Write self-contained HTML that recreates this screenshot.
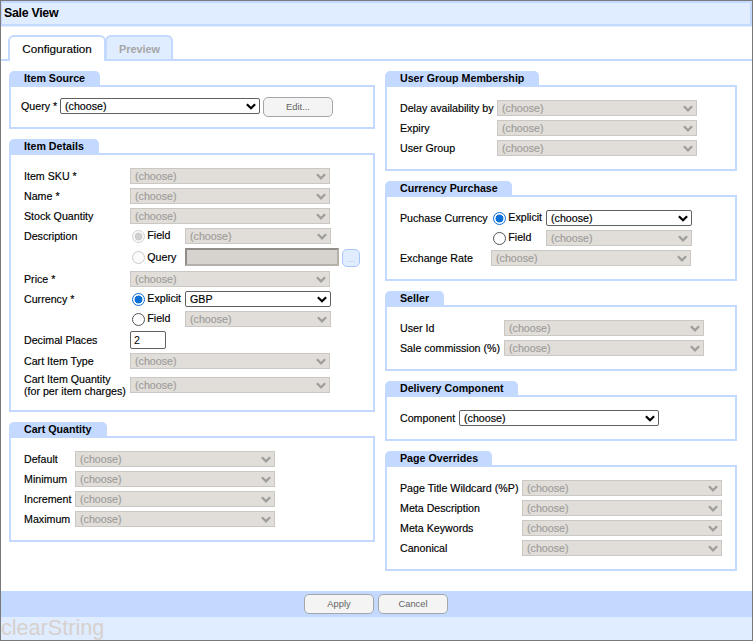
<!DOCTYPE html><html><head><meta charset="utf-8"><title>Sale View</title><style>
html,body{margin:0;padding:0;}
body{width:753px;height:641px;position:relative;overflow:hidden;background:#fff;font-family:"Liberation Sans",sans-serif;font-size:10.67px;color:#000;}
div,span{position:absolute;box-sizing:border-box;white-space:nowrap;}
.frame{left:0;top:0;width:753px;height:641px;border:1px solid #7a7a7a;}
.title{left:1px;top:1px;width:751px;height:25px;background:#e0ecff;border:1px solid #c3d9ff;border-width:2px 2px 2px 1px;box-shadow:0 1px 0 rgba(195,217,255,0.45);}
.title span{left:2px;top:3px;font-weight:bold;font-size:12.4px;line-height:14px;letter-spacing:-0.3px;}
.tabline{left:1px;top:59px;width:751px;height:2px;background:#c3d9ff;}
.tab{top:35px;border:2px solid #c3d9ff;border-bottom:none;border-radius:6px 6px 0 0;font-size:11.7px;line-height:14px;text-align:center;padding-top:5px;}
.tab.on{background:#fff;height:26px;}
.tab.off{background:#e0ecff;color:#a6a6a6;height:24px;font-weight:bold;font-size:10.9px;padding-left:1px;}
.lg{height:15px;background:#c3d9ff;border-radius:5px 5px 0 0;font-weight:bold;line-height:14px;padding-left:15px;}
.fs{border:2px solid #c3d9ff;}
.lb,.sd,.se,.tab.on{-webkit-text-stroke:0.16px;}
.lb{line-height:12px;}
.sd{height:16px;background:#e1ded9;border:1px solid #cbc8c3;color:#9e9c99;line-height:14px;padding-left:4px;}
.se{height:16px;background:#fff;border:1px solid #606060;border-radius:2px;color:#000;line-height:14px;padding-left:4px;}
.ch{right:3px;top:3.5px;width:10px;height:7px;}
.btn{height:20px;background:#f4f4f4;border:1px solid #a3a6aa;border-radius:5px;color:#636363;font-size:9.33px;line-height:18px;text-align:center;}
.rd{width:13px;height:13px;border-radius:50%;}
.bar{left:1px;top:591px;width:751px;height:26px;background:#c3d9ff;}
.foot{left:1px;top:617px;width:751px;height:23px;background:#e0ecff;}
.logo{left:1px;top:614px;font-size:21.6px;line-height:28px;color:#d7d1cd;}
</style></head><body>
<div class="title"><span>Sale View</span></div>
<div class="tabline"></div>
<div class="tab on" style="left:8px;width:98px;">Configuration</div>
<div class="tab off" style="left:105px;width:68px;">Preview</div>
<div class="lg" style="left:9px;top:71px;width:91px;">Item Source</div>
<div class="fs" style="left:9px;top:85px;width:366px;height:44px;"></div>
<span class="lb" style="left:21px;top:100px;">Query *</span>
<div class="se" style="left:60px;top:98px;width:200px;">(choose)<svg class="ch" viewBox="0 0 10 7" style="position:absolute"><path d="M0.9 1.2 L5 5.3 L9.1 1.2" fill="none" stroke="#000" stroke-width="2.2"/></svg></div>
<div class="btn" style="left:263px;top:97px;width:70px;height:20px;line-height:18px">Edit...</div>
<div class="lg" style="left:9px;top:139px;width:90px;">Item Details</div>
<div class="fs" style="left:9px;top:153px;width:366px;height:259px;"></div>
<span class="lb" style="left:24px;top:170px;">Item SKU *</span>
<span class="lb" style="left:24px;top:190px;">Name *</span>
<span class="lb" style="left:24px;top:210px;">Stock Quantity</span>
<span class="lb" style="left:24px;top:230px;">Description</span>
<span class="lb" style="left:24px;top:273px;">Price *</span>
<span class="lb" style="left:24px;top:293px;">Currency *</span>
<span class="lb" style="left:24px;top:334px;">Decimal Places</span>
<span class="lb" style="left:24px;top:355px;">Cart Item Type</span>
<span class="lb" style="left:24px;top:373px;">Cart Item Quantity</span>
<span class="lb" style="left:24px;top:385px;">(for per item charges)</span>
<div class="sd" style="left:130px;top:168px;width:200px;">(choose)<svg class="ch" viewBox="0 0 10 7" style="position:absolute"><path d="M0.9 1.2 L5 5.3 L9.1 1.2" fill="none" stroke="#9f9e9b" stroke-width="2.3"/></svg></div>
<div class="sd" style="left:130px;top:188px;width:200px;">(choose)<svg class="ch" viewBox="0 0 10 7" style="position:absolute"><path d="M0.9 1.2 L5 5.3 L9.1 1.2" fill="none" stroke="#9f9e9b" stroke-width="2.3"/></svg></div>
<div class="sd" style="left:130px;top:208px;width:200px;">(choose)<svg class="ch" viewBox="0 0 10 7" style="position:absolute"><path d="M0.9 1.2 L5 5.3 L9.1 1.2" fill="none" stroke="#9f9e9b" stroke-width="2.3"/></svg></div>
<div class="sd" style="left:130px;top:271px;width:200px;">(choose)<svg class="ch" viewBox="0 0 10 7" style="position:absolute"><path d="M0.9 1.2 L5 5.3 L9.1 1.2" fill="none" stroke="#9f9e9b" stroke-width="2.3"/></svg></div>
<div class="sd" style="left:130px;top:353px;width:200px;">(choose)<svg class="ch" viewBox="0 0 10 7" style="position:absolute"><path d="M0.9 1.2 L5 5.3 L9.1 1.2" fill="none" stroke="#9f9e9b" stroke-width="2.3"/></svg></div>
<div class="sd" style="left:130px;top:377px;width:200px;">(choose)<svg class="ch" viewBox="0 0 10 7" style="position:absolute"><path d="M0.9 1.2 L5 5.3 L9.1 1.2" fill="none" stroke="#9f9e9b" stroke-width="2.3"/></svg></div>
<div class="rd" style="left:132px;top:230px;border:1px solid #d0d0d0;background:radial-gradient(circle,#cfcfcf 0,#cfcfcf 3.6px,#fafafa 4.3px);"></div>
<span class="lb" style="left:147.3px;top:229px;">Field</span>
<div class="sd" style="left:185px;top:228px;width:146px;">(choose)<svg class="ch" viewBox="0 0 10 7" style="position:absolute"><path d="M0.9 1.2 L5 5.3 L9.1 1.2" fill="none" stroke="#9f9e9b" stroke-width="2.3"/></svg></div>
<div class="rd" style="left:132px;top:251px;border:1px solid #c9c9c9;background:#fbfbfb;"></div>
<span class="lb" style="left:147.3px;top:251px;">Query</span>
<div style="left:185px;top:248px;width:154px;height:18px;background:#d6d3ce;border:2px solid;border-color:#908d88 #b4b1ac #b4b1ac #908d88;"></div>
<div style="left:342px;top:249px;width:18px;height:18px;background:#e0ecff;border:1px solid #a9c6fa;border-radius:5px;color:#c4c4c4;font-size:9.33px;line-height:19px;text-align:center;">...</div>
<div class="rd" style="left:132px;top:293px;border:1.4px solid #0b6fd8;background:radial-gradient(circle,#0b6fd8 0,#0b6fd8 3.6px,#fff 4.3px);"></div>
<span class="lb" style="left:147.3px;top:292px;">Explicit</span>
<div class="se" style="left:185px;top:291px;width:146px;">GBP<svg class="ch" viewBox="0 0 10 7" style="position:absolute"><path d="M0.9 1.2 L5 5.3 L9.1 1.2" fill="none" stroke="#000" stroke-width="2.2"/></svg></div>
<div class="rd" style="left:132px;top:313px;border:1.3px solid #555;background:#fff;"></div>
<span class="lb" style="left:147.3px;top:312px;">Field</span>
<div class="sd" style="left:185px;top:311px;width:146px;">(choose)<svg class="ch" viewBox="0 0 10 7" style="position:absolute"><path d="M0.9 1.2 L5 5.3 L9.1 1.2" fill="none" stroke="#9f9e9b" stroke-width="2.3"/></svg></div>
<div style="left:130px;top:331px;width:36px;height:18px;background:#fff;border:1px solid #606060;border-radius:2px;line-height:16px;padding-left:3px;">2</div>
<div class="lg" style="left:9px;top:422px;width:98px;">Cart Quantity</div>
<div class="fs" style="left:9px;top:436px;width:366px;height:106px;"></div>
<span class="lb" style="left:24px;top:453px;">Default</span>
<div class="sd" style="left:75px;top:451px;width:200px;">(choose)<svg class="ch" viewBox="0 0 10 7" style="position:absolute"><path d="M0.9 1.2 L5 5.3 L9.1 1.2" fill="none" stroke="#9f9e9b" stroke-width="2.3"/></svg></div>
<span class="lb" style="left:24px;top:473px;">Minimum</span>
<div class="sd" style="left:75px;top:471px;width:200px;">(choose)<svg class="ch" viewBox="0 0 10 7" style="position:absolute"><path d="M0.9 1.2 L5 5.3 L9.1 1.2" fill="none" stroke="#9f9e9b" stroke-width="2.3"/></svg></div>
<span class="lb" style="left:24px;top:493px;">Increment</span>
<div class="sd" style="left:75px;top:491px;width:200px;">(choose)<svg class="ch" viewBox="0 0 10 7" style="position:absolute"><path d="M0.9 1.2 L5 5.3 L9.1 1.2" fill="none" stroke="#9f9e9b" stroke-width="2.3"/></svg></div>
<span class="lb" style="left:24px;top:513px;">Maximum</span>
<div class="sd" style="left:75px;top:511px;width:200px;">(choose)<svg class="ch" viewBox="0 0 10 7" style="position:absolute"><path d="M0.9 1.2 L5 5.3 L9.1 1.2" fill="none" stroke="#9f9e9b" stroke-width="2.3"/></svg></div>
<div class="lg" style="left:385px;top:71px;width:154px;">User Group Membership</div>
<div class="fs" style="left:385px;top:85px;width:352px;height:86px;"></div>
<span class="lb" style="left:400px;top:102px;">Delay availability by</span>
<div class="sd" style="left:497px;top:100px;width:200px;">(choose)<svg class="ch" viewBox="0 0 10 7" style="position:absolute"><path d="M0.9 1.2 L5 5.3 L9.1 1.2" fill="none" stroke="#9f9e9b" stroke-width="2.3"/></svg></div>
<span class="lb" style="left:400px;top:122px;">Expiry</span>
<div class="sd" style="left:497px;top:120px;width:200px;">(choose)<svg class="ch" viewBox="0 0 10 7" style="position:absolute"><path d="M0.9 1.2 L5 5.3 L9.1 1.2" fill="none" stroke="#9f9e9b" stroke-width="2.3"/></svg></div>
<span class="lb" style="left:400px;top:142px;">User Group</span>
<div class="sd" style="left:497px;top:140px;width:200px;">(choose)<svg class="ch" viewBox="0 0 10 7" style="position:absolute"><path d="M0.9 1.2 L5 5.3 L9.1 1.2" fill="none" stroke="#9f9e9b" stroke-width="2.3"/></svg></div>
<div class="lg" style="left:385px;top:181px;width:127px;">Currency Purchase</div>
<div class="fs" style="left:385px;top:195px;width:352px;height:86px;"></div>
<span class="lb" style="left:400px;top:212px;">Puchase Currency</span>
<div class="rd" style="left:493px;top:212px;border:1.4px solid #0b6fd8;background:radial-gradient(circle,#0b6fd8 0,#0b6fd8 3.6px,#fff 4.3px);"></div>
<span class="lb" style="left:508.3px;top:211px;">Explicit</span>
<div class="se" style="left:546px;top:210px;width:146px;">(choose)<svg class="ch" viewBox="0 0 10 7" style="position:absolute"><path d="M0.9 1.2 L5 5.3 L9.1 1.2" fill="none" stroke="#000" stroke-width="2.2"/></svg></div>
<div class="rd" style="left:493px;top:232px;border:1.3px solid #555;background:#fff;"></div>
<span class="lb" style="left:508.3px;top:231px;">Field</span>
<div class="sd" style="left:546px;top:230px;width:146px;">(choose)<svg class="ch" viewBox="0 0 10 7" style="position:absolute"><path d="M0.9 1.2 L5 5.3 L9.1 1.2" fill="none" stroke="#9f9e9b" stroke-width="2.3"/></svg></div>
<span class="lb" style="left:400px;top:252px;">Exchange Rate</span>
<div class="sd" style="left:491px;top:250px;width:200px;">(choose)<svg class="ch" viewBox="0 0 10 7" style="position:absolute"><path d="M0.9 1.2 L5 5.3 L9.1 1.2" fill="none" stroke="#9f9e9b" stroke-width="2.3"/></svg></div>
<div class="lg" style="left:385px;top:291px;width:59px;">Seller</div>
<div class="fs" style="left:385px;top:305px;width:352px;height:66px;"></div>
<span class="lb" style="left:400px;top:322px;">User Id</span>
<div class="sd" style="left:504px;top:320px;width:200px;">(choose)<svg class="ch" viewBox="0 0 10 7" style="position:absolute"><path d="M0.9 1.2 L5 5.3 L9.1 1.2" fill="none" stroke="#9f9e9b" stroke-width="2.3"/></svg></div>
<span class="lb" style="left:400px;top:342px;">Sale commission (%)</span>
<div class="sd" style="left:504px;top:340px;width:200px;">(choose)<svg class="ch" viewBox="0 0 10 7" style="position:absolute"><path d="M0.9 1.2 L5 5.3 L9.1 1.2" fill="none" stroke="#9f9e9b" stroke-width="2.3"/></svg></div>
<div class="lg" style="left:385px;top:381px;width:133px;">Delivery Component</div>
<div class="fs" style="left:385px;top:395px;width:352px;height:46px;"></div>
<span class="lb" style="left:400px;top:412px;">Component</span>
<div class="se" style="left:459px;top:410px;width:200px;">(choose)<svg class="ch" viewBox="0 0 10 7" style="position:absolute"><path d="M0.9 1.2 L5 5.3 L9.1 1.2" fill="none" stroke="#000" stroke-width="2.2"/></svg></div>
<div class="lg" style="left:385px;top:451px;width:107px;">Page Overrides</div>
<div class="fs" style="left:385px;top:465px;width:352px;height:106px;"></div>
<span class="lb" style="left:400px;top:482px;">Page Title Wildcard (%P)</span>
<div class="sd" style="left:522px;top:480px;width:200px;">(choose)<svg class="ch" viewBox="0 0 10 7" style="position:absolute"><path d="M0.9 1.2 L5 5.3 L9.1 1.2" fill="none" stroke="#9f9e9b" stroke-width="2.3"/></svg></div>
<span class="lb" style="left:400px;top:502px;">Meta Description</span>
<div class="sd" style="left:522px;top:500px;width:200px;">(choose)<svg class="ch" viewBox="0 0 10 7" style="position:absolute"><path d="M0.9 1.2 L5 5.3 L9.1 1.2" fill="none" stroke="#9f9e9b" stroke-width="2.3"/></svg></div>
<span class="lb" style="left:400px;top:522px;">Meta Keywords</span>
<div class="sd" style="left:522px;top:520px;width:200px;">(choose)<svg class="ch" viewBox="0 0 10 7" style="position:absolute"><path d="M0.9 1.2 L5 5.3 L9.1 1.2" fill="none" stroke="#9f9e9b" stroke-width="2.3"/></svg></div>
<span class="lb" style="left:400px;top:542px;">Canonical</span>
<div class="sd" style="left:522px;top:540px;width:200px;">(choose)<svg class="ch" viewBox="0 0 10 7" style="position:absolute"><path d="M0.9 1.2 L5 5.3 L9.1 1.2" fill="none" stroke="#9f9e9b" stroke-width="2.3"/></svg></div>
<div class="bar"></div>
<div class="btn" style="left:304px;top:594px;width:70px;height:20px;line-height:18px">Apply</div>
<div class="btn" style="left:378px;top:594px;width:70px;height:20px;line-height:18px">Cancel</div>
<div class="foot"></div>
<span class="logo">clearString</span>
<div class="frame"></div>
</body></html>
